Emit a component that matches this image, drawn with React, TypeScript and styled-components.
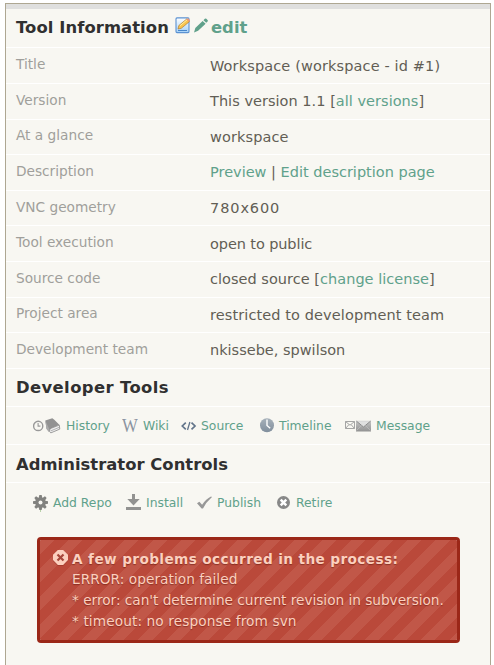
import React from "react";
import styled, { createGlobalStyle } from "styled-components";

const Global = createGlobalStyle`
  * { box-sizing: border-box; }
  html, body { margin: 0; background: #fff; overflow: hidden; }
  body { font-family: "DejaVu Sans", sans-serif; }
`;

const Panel = styled.main`
  height: 662px;
  margin: 3px 3px 0 5px;
  border: 1px solid #aea792;
  border-bottom: 0;
  background: #f8f7f2;
`;
const TopBar = styled.div`
  height: 5px;
  background: #dfdfde;
`;
const Heading = styled.h2<{ $h: number; $top: number; $track: number }>`
  display: flex;
  align-items: flex-start;
  height: ${(p) => p.$h}px;
  margin: 0;
  padding: ${(p) => p.$top}px 10px 0;
  border-bottom: 1px solid #fff;
  color: #303030;
  font-size: 16.4px;
  letter-spacing: ${(p) => p.$track}px;
  line-height: 20px;
  white-space: pre;
`;
const HeadIcons = styled.span`
  display: flex;
  align-items: center;
  gap: 3px;
  margin: -1px 3px 0 6px;
`;
const Link = styled.a`
  color: #60a18b;
  text-decoration: none;
`;
const Row = styled.div<{ $h: number }>`
  display: grid;
  grid-template-columns: 194px 1fr;
  height: ${(p) => p.$h}px;
  padding: 0 10px;
  border-bottom: 1px solid #fff;
  white-space: pre;
`;
const Label = styled.span<{ $top: number }>`
  padding-top: ${(p) => p.$top}px;
  color: #a09f9b;
  font-size: 13.7px;
  line-height: 20px;
`;
const Value = styled.span<{ $top: number; $track: number }>`
  padding-top: ${(p) => p.$top}px;
  color: #625e55;
  font-size: 14.5px;
  letter-spacing: ${(p) => p.$track}px;
  line-height: 20px;
`;
const Tools = styled.nav<{ $h: number; $top: number; $line?: boolean }>`
  display: flex;
  height: ${(p) => p.$h}px;
  padding: ${(p) => p.$top}px 0 0 27px;
  border-bottom: ${(p) => (p.$line ? "1px solid #fff" : "0")};
`;
const Tool = styled.a<{ $w: number }>`
  display: flex;
  align-items: center;
  width: ${(p) => p.$w}px;
  height: 20px;
  color: #60a18b;
  font-size: 12.35px;
  line-height: 20px;
  white-space: nowrap;
`;
const IconBox = styled.span<{ $w: number }>`
  display: flex;
  flex: none;
  align-items: center;
  width: ${(p) => p.$w}px;
  height: 20px;
`;
const Glyph = styled.span`
  color: #8a93a0;
  font: 19px "Liberation Serif", serif;
  line-height: 18px;
  transform: scaleX(0.88);
  transform-origin: left;
`;
const Alert = styled.section`
  display: flex;
  width: 423px;
  height: 106px;
  margin: 18px 0 0 31px;
  padding: 10px 0 0 13px;
  border: 3px solid #9b2718;
  border-radius: 4px;
  background: repeating-linear-gradient(135deg, #c15748 0 10px, #ba493a 10px 20px) padding-box;
  color: #fcd0bf;
  text-shadow: 0 1px 1px rgba(90, 20, 10, 0.5);
`;
const AlertText = styled.div`
  margin: -1px 0 0 3px;
  font-size: 13.7px;
  white-space: nowrap;
`;
const AlertTitle = styled.strong`
  display: block;
  letter-spacing: 0.36px;
  line-height: 21px;
  margin-bottom: -1px;
`;
const AlertLine = styled.div<{ $track: number }>`
  letter-spacing: ${(p) => p.$track}px;
  line-height: 21px;
`;

const Note = () => (
  <svg width="16" height="17" viewBox="0 0 16 17">
    <defs>
      <linearGradient id="paper" x2="0" y2="1"><stop stopColor="#fff" /><stop offset="1" stopColor="#a5d1f7" /></linearGradient>
    </defs>
    <rect x="1" y=".9" width="13" height="14.7" rx="1" fill="url(#paper)" stroke="#5b92d2" strokeWidth="1.1" />
    <path d="M3 13.5h9" stroke="#4686cb" />
    <path d="m3 12 .8-3.5 8-6.6q2.4.2 2.5 2.8l-8 6.6z" fill="#f9c44d" stroke="#a66e24" strokeWidth=".6" />
    <path d="m5 8.7 7-5.8" stroke="#fff1a3" />
    <path d="m11.3 2 2.7 3 1-1.5-1.5-2z" fill="#ef9777" />
  </svg>
);
const Pencil = () => (
  <svg width="14" height="15" viewBox="0 0 13 14">
    <path d="m0 13.5 1.2-4.2L8 2.7l2.8 2.7-7 6.6zM8.8 2l1.3-1.2q.7-.6 1.4 0l1.1 1q.7.7 0 1.4l-1.2 1.2z" fill="#60a18b" />
  </svg>
);
const History = () => (
  <svg width="29" height="17" viewBox="0 0 29 17">
    <circle cx="5.2" cy="7.9" r="4.6" fill="none" stroke="#999" strokeWidth="1.4" />
    <path d="M5.1 5.1v3h2.3" fill="none" stroke="#999" strokeWidth="1.1" />
    <path d="m12.3 2.5 7-2.2 2 1.5 5 5-8.4 3.7L16 14l-2.5-3.2z" fill="#929292" />
    <path d="m12.3 2.5 4.1 8.8v3L13.5 11z" fill="#aaa" />
    <path d="m17 10.7 9.3-3.6.5 4-9 3.8q-2-.8-.8-4.2" fill="#eee" stroke="#888" strokeWidth=".8" />
    <path d="m18 12.8 8.3-3.5" stroke="#888" strokeWidth=".6" />
  </svg>
);
const Code = () => (
  <svg width="16" height="10" viewBox="0 0 16 10" fill="none" stroke="#62748a" strokeWidth="1.7">
    <path d="M4.8 1.7 1.3 5l3.5 3.3M10.5 1.7 14 5l-3.5 3.3" />
    <path d="M8.9 1 6.5 9" strokeWidth="1.3" />
  </svg>
);
const Clock = () => (
  <svg width="15" height="17" viewBox="0 0 15 17">
    <defs><linearGradient id="clock" x2="0" y2="1"><stop stopColor="#a7b1ba" /><stop offset="1" stopColor="#818f9d" /></linearGradient></defs>
    <circle cx="7" cy="7.2" r="7" fill="url(#clock)" />
    <path d="M7 1.5v6l3.2 2.8" fill="none" stroke="#fff" strokeWidth="1.4" />
  </svg>
);
const Mail = () => (
  <svg width="27" height="12" viewBox="0 0 27 12">
    <defs><linearGradient id="mail" x2="0" y2="1"><stop stopColor="#c5c5c5" /><stop offset="1" stopColor="#929292" /></linearGradient></defs>
    <path d="M1.5 1.5h9v7h-9zL6 5.2l4.5-3.7M1.5 8.5l3.5-4M10.5 8.5 7 4.5" fill="none" stroke="#a5a5a5" />
    <path d="M12 .8h15v10.7H12z" fill="url(#mail)" />
    <path d="m12.5 1.2 7 5.8 7-5.8" fill="#e0e0e0" stroke="#8b8b8b" strokeWidth="1" />
    <path d="m12.5 10.5 5-5M26.5 10.5l-5-5" stroke="#bbb" strokeWidth=".8" />
  </svg>
);
const Gear = () => (
  <svg width="15" height="17" viewBox="0 0 15 17">
    <g fill="#82827f">
      <circle cx="7.5" cy="7.5" r="5.2" />
      {[0, 45, 90, 135].map((r) => <path key={r} d="M6.3 0h2.4l.6 3v9l-.6 3H6.3l-.6-3V3z" transform={`rotate(${r} 7.5 7.5)`} />)}
    </g>
    <circle cx="7.5" cy="7.5" r="2" fill="#f8f7f2" />
    <path d="M7 16h1" stroke="#79ac61" />
  </svg>
);
const Install = () => (
  <svg width="15" height="18" viewBox="0 0 15 18" fill="#929291">
    <path d="M6 0h3v5h4.7L7.5 11.5 1.3 5H6zM0 13h15v3H0z" />
  </svg>
);
const Check = () => (
  <svg width="15" height="15" viewBox="0 0 15 15">
    <path d="m0 7.2 2.4-1.5 2.7 3Q9 3 14 .5l1 .6Q9 6.4 6 12.5H4.6z" fill="#989898" />
  </svg>
);
const Cross = () => (
  <svg width="13" height="15" viewBox="0 0 13 15">
    <circle cx="6.5" cy="6.5" r="6.5" fill="#888" />
    <path d="m3.7 3.7 5.6 5.6m0-5.6L3.7 9.3" stroke="#fff" strokeWidth="2.5" />
  </svg>
);
const AlertIcon = () => (
  <svg width="16" height="17" viewBox="0 0 16 17">
    <path d="M4.9 1h5.2L15 5.6v5.1L10.1 16H4.9L0 11.1V5.7z" fill="#8f3024" opacity=".5" />
    <path d="M4.9 0h5.2L15 4.7v5.2L10.1 15H4.9L0 10.1V4.7z" fill="#fcd0bf" />
    <path d="m4.5 4.5 6 6m0-6-6 6" stroke="#a8473b" strokeWidth="2.2" />
  </svg>
);

type Fact = { name: string; value: React.ReactNode; h: number; labelTop?: number; top?: number; track?: number };
const facts: Fact[] = [
  { name: "Title", value: "Workspace (workspace - id #1)", h: 36, top: 8, track: 0.13 },
  { name: "Version", value: <>This version 1.1 [<Link>all versions</Link>]</>, h: 36, track: 0.03 },
  { name: "At a glance", value: "workspace", h: 35, labelTop: 5, track: 0.11 },
  { name: "Description", value: <><Link>Preview</Link> | <Link>Edit description page</Link></>, h: 36 },
  { name: "VNC geometry", value: "780x600", h: 35, track: 0.9 },
  { name: "Tool execution", value: "open to public", h: 36, top: 8, track: -0.1 },
  { name: "Source code", value: <>closed source [<Link>change license</Link>]</>, h: 36, track: 0.03 },
  { name: "Project area", value: "restricted to development team", h: 35, labelTop: 5, track: 0.1 },
  { name: "Development team", value: "nkissebe, spwilson", h: 36 },
];
type Item = [React.ReactNode, string, number, number];
const dev: Item[] = [
  [<History />, "History", 33, 89],
  [<Glyph>W</Glyph>, "Wiki", 21, 59],
  [<Code />, "Source", 20, 79],
  [<Clock />, "Timeline", 19, 84],
  [<Mail />, "Message", 32, 100],
];
const admin: Item[] = [
  [<Gear />, "Add Repo", 20, 93],
  [<Install />, "Install", 20, 71],
  [<Check />, "Publish", 20, 80],
  [<Cross />, "Retire", 19, 80],
];
const ToolList = ({ items }: { items: Item[] }) => (
  <>
    {items.map(([icon, name, iw, w]) => (
      <Tool key={name} $w={w}><IconBox $w={iw}>{icon}</IconBox>{name}</Tool>
    ))}
  </>
);

export default function App() {
  return (
    <>
      <Global />
      <Panel>
        <TopBar />
        <Heading $h={39} $top={9} $track={0.08}>
          Tool Information<HeadIcons><Note /><Pencil /></HeadIcons><Link>edit</Link>
        </Heading>
        {facts.map((f) => (
          <Row key={f.name} $h={f.h}>
            <Label $top={f.labelTop ?? 6}>{f.name}</Label>
            <Value $top={f.top ?? 7} $track={f.track ?? 0}>{f.value}</Value>
          </Row>
        ))}
        <Heading $h={38} $top={9} $track={0.4}>Developer Tools</Heading>
        <Tools $h={38} $top={9} $line><ToolList items={dev} /></Tools>
        <Heading $h={38} $top={10} $track={0.02}>Administrator Controls</Heading>
        <Tools $h={36} $top={10}><ToolList items={admin} /></Tools>
        <Alert>
          <AlertIcon />
          <AlertText>
            <AlertTitle>A few problems occurred in the process:</AlertTitle>
            <AlertLine $track={0.04}>ERROR: operation failed</AlertLine>
            <AlertLine $track={-0.03}>* error: can't determine current revision in subversion.</AlertLine>
            <AlertLine $track={0.1}>* timeout: no response from svn</AlertLine>
          </AlertText>
        </Alert>
      </Panel>
    </>
  );
}
